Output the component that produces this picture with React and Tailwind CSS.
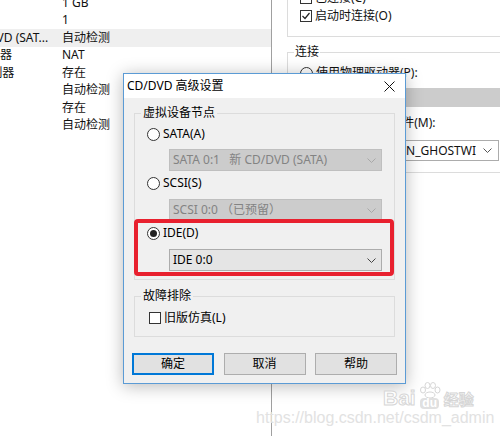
import React from 'react';

function Chevron({ className }) {
    return (
        <svg width="9" height="5" viewBox="0 0 9 5" className={className}>
            <path d="M0.5 0.5 L4.5 4.5 L8.5 0.5" fill="none" stroke="currentColor" strokeWidth="1" />
        </svg>
    );
}

function Radio({ checked }) {
    return (
        <span className="w-[13px] h-[13px] rounded-full border border-[#333] bg-white flex items-center justify-center shrink-0">
            {checked && <span className="w-[7px] h-[7px] rounded-full bg-[#222]" />}
        </span>
    );
}

function Checkbox({ checked }) {
    return (
        <span className="w-[12px] h-[12px] border border-[#333] bg-white flex items-center justify-center shrink-0">
            {checked && (
                <svg width="10" height="10" viewBox="0 0 10 10">
                    <path d="M1.5 5 L4 7.5 L8.5 2" fill="none" stroke="#222" strokeWidth="1.2" />
                </svg>
            )}
        </span>
    );
}

function Combo({ text, disabled }) {
    return (
        <div className={`ml-[34px] mr-[12px] h-[22px] border flex items-center justify-between pl-[3px] pr-[5px] ${disabled ? 'bg-[#cccccc] border-[#bfbfbf] text-[#838383]' : 'bg-[#e5e5e5] border-[#acacac] text-black'}`}>
            <span className="whitespace-pre">{text}</span>
            <Chevron className={disabled ? 'text-[#a8a8a8]' : 'text-[#444]'} />
        </div>
    );
}

const rows = [
    ['', '1 GB'],
    ['', '1'],
    ['新 CD/DVD (SAT...', '自动检测', true],
    ['网络适配器', 'NAT'],
    ['USB 控制器', '存在'],
    ['声卡', '自动检测'],
    ['打印机', '存在'],
    ['显示器', '自动检测'],
];

export default function App() {
    return (
        <div className="relative w-[500px] h-[436px] overflow-hidden bg-white flex text-[12px] leading-[16px] text-[#111] font-[family-name:Noto_Sans,Noto_Sans_CJK_SC,sans-serif]">
            {/* hardware list */}
            <div className="w-[272px] shrink-0 border-r border-[#a0a0a0]">
                <div className="-mt-[6px]">
                    {rows.map(([label, value, active], i) => (
                        <div key={i} className={`h-[17.5px] flex items-center ${active ? 'bg-[#efefef]' : ''}`}>
                            <span className="-ml-[48px] w-[110px] shrink-0 whitespace-nowrap overflow-hidden">{label}</span>
                            <span className="whitespace-nowrap">{value}</span>
                        </div>
                    ))}
                </div>
            </div>

            {/* device settings */}
            <div className="flex-1 pl-[15px]">
                <div className="w-[260px] -mt-[20px] border border-[#dcdcdc] pt-[8px] pb-[11px] pl-[12px]">
                    <div className="h-[18px] flex items-center gap-[3px]"><Checkbox /> 已连接(C)</div>
                    <div className="h-[18px] flex items-center gap-[3px]"><Checkbox checked /> 启动时连接(O)</div>
                </div>
                <fieldset className="w-[260px] mt-[7px] border border-[#dcdcdc] pb-[11px]">
                    <legend className="ml-[6px] px-[1px]">连接</legend>
                    <div className="mt-[5px] h-[16px] pl-[12px] flex items-center gap-[3px]"><Radio /> 使用物理驱动器(P):</div>
                    <div className="mt-[7px] ml-[28px] h-[19px] bg-[#cccccc]" />
                    <div className="mt-[8px] h-[16px] pl-[12px] flex items-center gap-[3px]"><Radio checked /> 使用 ISO 映像文件(M):</div>
                    <div className="mt-[9px] ml-[28px] w-[183px] h-[21px] bg-white border border-[#acacac] flex items-center justify-end gap-[7px] pr-[6px]">
                        <span className="whitespace-nowrap overflow-hidden">D:\ISO\CN_GHOSTWI</span>
                        <Chevron className="text-[#555] shrink-0" />
                    </div>
                </fieldset>
            </div>

            {/* dialog */}
            <div className="absolute left-[123px] top-[73px] w-[283px] h-[311px] bg-[#f0f0f0] border border-[#5b9bd5] shadow-[0_2px_16px_rgba(0,0,0,0.28)] flex flex-col text-black">
                <div className="h-[24px] bg-white flex items-center justify-between pl-[3px] pr-[10px]">
                    <span>CD/DVD 高级设置</span>
                    <svg width="11" height="11" viewBox="0 0 11 11">
                        <path d="M0.5 0.5 L10.5 10.5 M10.5 0.5 L0.5 10.5" stroke="#111" strokeWidth="1" />
                    </svg>
                </div>
                <div className="px-[10px] pt-[7px] flex flex-col">
                    <fieldset className="border border-[#dcdcdc] pb-[8px]">
                        <legend className="ml-[6px] px-[2px]">虚拟设备节点</legend>
                        <div className="mt-[5px] h-[16px] pl-[12px] flex items-center gap-[3px]"><Radio /> SATA(A)</div>
                        <div className="mt-[7px]"><Combo text="SATA 0:1   新 CD/DVD (SATA)" disabled /></div>
                        <div className="mt-[4px] h-[16px] pl-[12px] flex items-center gap-[3px]"><Radio /> SCSI(S)</div>
                        <div className="mt-[8px]"><Combo text="SCSI 0:0 （已预留）" disabled /></div>
                        <div className="mt-[4px] h-[16px] pl-[12px] flex items-center gap-[3px]"><Radio checked /> IDE(D)</div>
                        <div className="mt-[8px]"><Combo text="IDE 0:0" /></div>
                    </fieldset>
                    <fieldset className="mt-[8px] border border-[#dcdcdc] pb-[10px]">
                        <legend className="ml-[6px] px-[2px]">故障排除</legend>
                        <div className="mt-[6px] h-[16px] pl-[14px] flex items-center gap-[3px]"><Checkbox /> 旧版仿真(L)</div>
                    </fieldset>
                    <div className="-mx-[2px] mt-[16px] flex justify-between">
                        <button className="w-[82px] h-[22px] border-2 border-[#0078d7] bg-[#e1e1e1]">确定</button>
                        <button className="w-[82px] h-[22px] border border-[#adadad] bg-[#e1e1e1]">取消</button>
                        <button className="w-[82px] h-[22px] border border-[#adadad] bg-[#e1e1e1]">帮助</button>
                    </div>
                </div>
                {/* annotation */}
                <div className="absolute left-[10px] top-[145px] w-[260px] h-[57px] border-4 border-[#e8202e] rounded-[4px]" />
            </div>

            {/* watermark */}
            <div className="absolute left-[383px] top-[382px] flex items-end gap-[3px] text-white">
                <span className="font-[family-name:Liberation_Sans,sans-serif] font-bold text-[21px] leading-[22px] [-webkit-text-stroke:1px_#d6d6d6]">Bai</span>
                <div className="flex flex-col items-center">
                    <svg width="22" height="16" viewBox="0 0 22 16" fill="#fff" stroke="#d6d6d6" strokeWidth="1">
                        <ellipse cx="4" cy="8" rx="2.5" ry="3" />
                        <ellipse cx="8.5" cy="3.5" rx="2.5" ry="3" />
                        <ellipse cx="14" cy="3.5" rx="2.5" ry="3" />
                        <ellipse cx="18.5" cy="8" rx="2.5" ry="3" />
                        <ellipse cx="11" cy="13" rx="5" ry="3" />
                    </svg>
                    <span className="px-[2px] rounded-[4px] bg-[#e0e0e0] text-white font-[family-name:Liberation_Sans,sans-serif] font-bold text-[12px] leading-[11px]">du</span>
                </div>
                <span className="text-[15px] leading-[20px] font-bold [-webkit-text-stroke:1px_#d6d6d6]">经验</span>
            </div>
            <div className="absolute left-[256px] top-[408px] text-[16px] leading-[20px] text-[#e2e2e2] font-[family-name:Liberation_Sans,sans-serif] whitespace-nowrap">
                https://blog.csdn.net/csdm_admin
            </div>
        </div>
    );
}
